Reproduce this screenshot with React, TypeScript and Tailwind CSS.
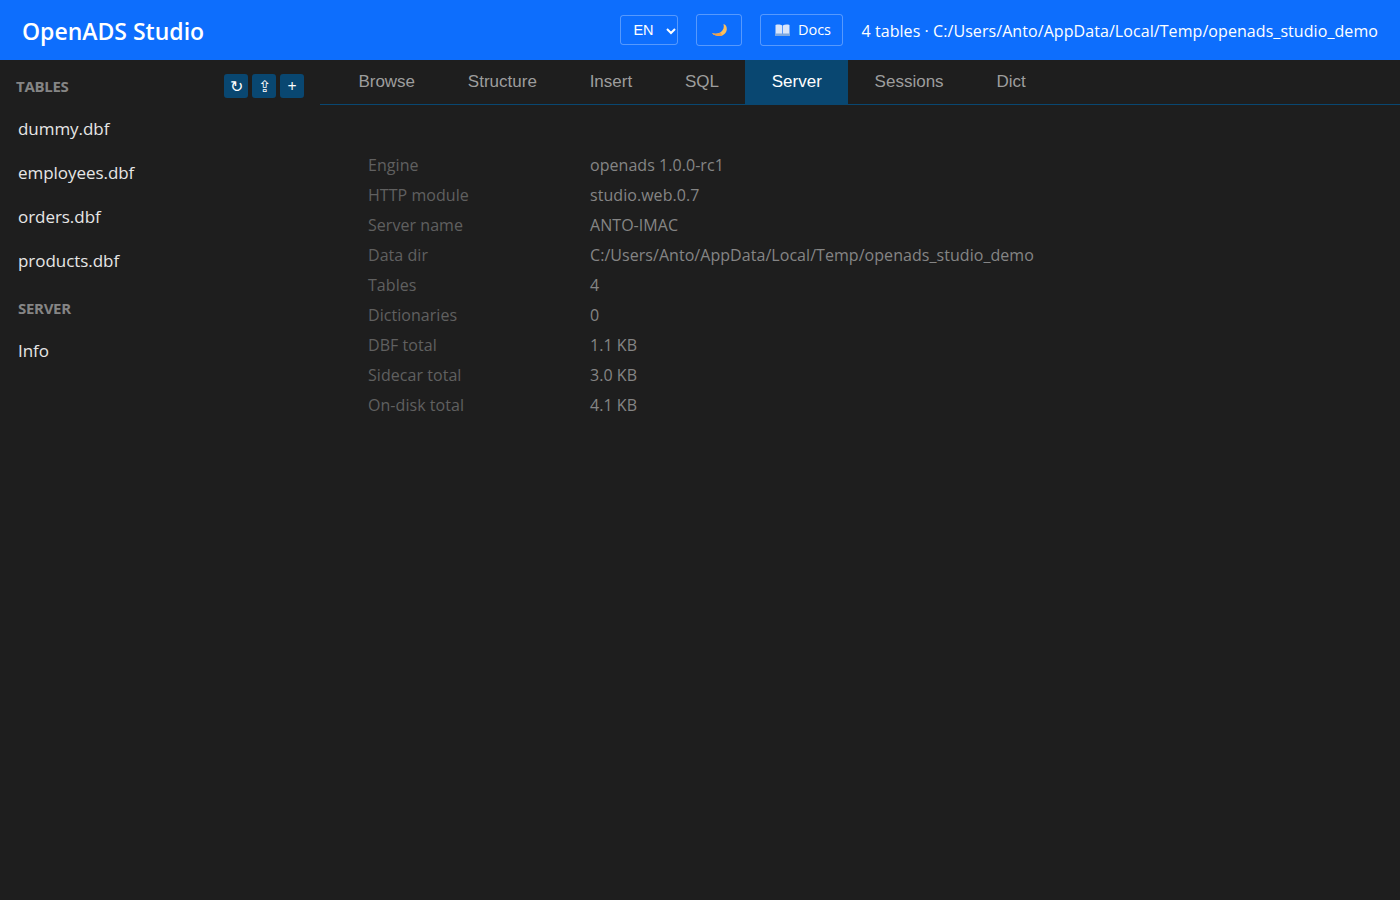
import React from 'react';

const SEGOE = "font-['Open_Sans','Noto_Sans',sans-serif]";

const tabs = ['Browse', 'Structure', 'Insert', 'SQL', 'Server', 'Sessions', 'Dict'];
const tables = ['dummy.dbf', 'employees.dbf', 'orders.dbf', 'products.dbf'];
const info: Array<[string, string]> = [
  ['Engine', 'openads 1.0.0-rc1'],
  ['HTTP module', 'studio.web.0.7'],
  ['Server name', 'ANTO-IMAC'],
  ['Data dir', 'C:/Users/Anto/AppData/Local/Temp/openads_studio_demo'],
  ['Tables', '4'],
  ['Dictionaries', '0'],
  ['DBF total', '1.1 KB'],
  ['Sidecar total', '3.0 KB'],
  ['On-disk total', '4.1 KB'],
];

const MoonIcon = () => (
  <svg width="15" height="12" viewBox="0 0 15 12">
    <path d="M11.5 0 C14 0.8 15 3 14.800 5.500 C14.500 9 11.500 12 7.500 12 C4.500 12 1.500 11 0 9.300 C3 10 6.500 9.800 9 8 C11.500 6 12.300 3 11.500 0 Z" fill="#fbbf5d" />
    <path d="M0 9.300 C1.500 11 4.500 12 7.500 12 C8.500 12 9.500 11.800 10.300 11.400 L8.500 8.400 C6.200 9.900 3 10 0 9.300 Z" fill="#f0a04b" />
  </svg>
);

const BookIcon = () => (
  <svg width="15" height="12" viewBox="0 0 15 12">
    <path d="M0.500 1 C2.500 0.300 5.500 0.300 7.200 1.500 V10.500 H0.500 Z" fill="#d9e5fa" />
    <path d="M14.500 1 C12.500 0.300 9.500 0.300 7.800 1.500 V10.500 H14.500 Z" fill="#d9e5fa" />
    <path d="M0 9.500 H7 L7.500 10.300 L8 9.500 H15 V12 H0 Z" fill="#7fa8de" />
  </svg>
);

const SideButton = ({ children }: { children: React.ReactNode }) => (
  <button className="w-6 h-6 rounded-[3px] bg-[#094771] text-white text-[16px] leading-6 text-center">
    {children}
  </button>
);

export default function App() {
  return (
    <div className={`min-h-[900px] flex flex-col bg-[#1e1e1e] ${SEGOE}`}>
      {/* Header */}
      <header className="h-[60px] shrink-0 bg-[#0d6efd] flex items-center pl-[22px] pr-[22px] text-white">
        <h1 className="text-[23px] font-semibold mt-[2px]">OpenADS Studio</h1>
        <div className="ml-auto flex items-center">
          <div className="w-[58px] h-[30px] rounded-[3px] border border-white/30 flex items-center pl-3 pt-[1px] font-['Liberation_Sans',sans-serif] text-[14.5px]">
            EN
            <svg className="ml-[12px]" width="10" height="8" viewBox="0 0 10 8" fill="none" stroke="white" strokeWidth="2">
              <path d="M1 2 L5 6 L9 2" />
            </svg>
          </div>
          <button className="ml-[18px] w-[46px] h-8 rounded-[3px] border border-white/30 flex items-center justify-center">
            <MoonIcon />
          </button>
          <button className="ml-[18px] w-[83px] h-8 rounded-[3px] border border-white/30 flex items-center justify-center gap-2 pl-[2px] text-[14.5px]">
            <BookIcon />
            Docs
          </button>
          <span className="ml-[18px] mt-[2px] text-[16px] tracking-[0.07px]">
            4 tables · C:/Users/Anto/AppData/Local/Temp/openads_studio_demo
          </span>
        </div>
      </header>

      <div className="flex flex-1">
        {/* Sidebar */}
        <aside className="w-[320px] shrink-0 px-4 text-[#e6e6e6]">
          <div className="h-[47px] pt-[14px] flex items-start justify-between">
            <span className="h-6 flex items-center text-[15px] font-bold text-[#858585] tracking-[-0.3px]">TABLES</span>
            <div className="flex gap-1">
              <SideButton>↻</SideButton>
              <SideButton>⇪</SideButton>
              <SideButton>+</SideButton>
            </div>
          </div>
          {tables.map((t) => (
            <div key={t} className="h-11 flex items-center px-[2px] text-[17px] tracking-[-0.05px]">
              {t}
            </div>
          ))}
          <div className="h-[50px] flex items-center px-[2px] text-[15px] font-bold text-[#858585] tracking-[-0.3px]">
            SERVER
          </div>
          <div className="h-9 flex items-center px-[2px] text-[17px] tracking-[-0.05px]">Info</div>
        </aside>

        {/* Main */}
        <main className="flex-1 min-w-0">
          <nav className="h-[45px] flex border-b border-[#094771] pl-3 font-['Liberation_Sans',sans-serif] text-[17px]">
            {tabs.map((t) => (
              <div
                key={t}
                className={`h-[44px] flex items-center px-[26.4px] ${
                  t === 'Server' ? 'bg-[#094771] text-white' : 'text-[#9d9d9d]'
                }`}
              >
                {t}
              </div>
            ))}
          </nav>
          <div className="pt-[45px] pl-12 grid grid-cols-[222px_1fr] auto-rows-[30px] items-center text-[16px] tracking-[0.05px]">
            {info.map(([k, v]) => (
              <React.Fragment key={k}>
                <div className="text-[#606060]">{k}</div>
                <div className="text-[#858585]">{v}</div>
              </React.Fragment>
            ))}
          </div>
        </main>
      </div>
    </div>
  );
}
